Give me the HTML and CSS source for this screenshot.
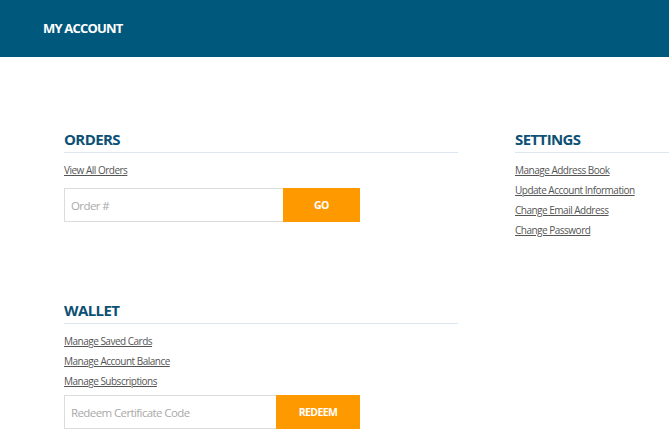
FILE: index.html
```html
<!DOCTYPE html>
<html>
<head>
<meta charset="utf-8">
<link rel="stylesheet" href="styles.css">
</head>
<body>
<header class="topbar"><h1 class="topbar-title">MY ACCOUNT</h1></header>
<main class="content">
  <div class="col">
    <section class="block block-orders">
      <h2 class="block-title">ORDERS</h2>
      <ul class="links">
        <li><a href="#">View All Orders</a></li>
      </ul>
      <form class="inline-form form-orders">
        <input class="field" type="text" placeholder="Order #">
        <button class="btn" type="button">GO</button>
      </form>
    </section>
    <section class="block block-wallet">
      <h2 class="block-title">WALLET</h2>
      <ul class="links">
        <li><a href="#">Manage Saved Cards</a></li>
        <li><a href="#">Manage Account Balance</a></li>
        <li><a href="#">Manage Subscriptions</a></li>
      </ul>
      <form class="inline-form form-wallet">
        <input class="field" type="text" placeholder="Redeem Certificate Code">
        <button class="btn" type="button">REDEEM</button>
      </form>
    </section>
  </div>
  <div class="col">
    <section class="block">
      <h2 class="block-title">SETTINGS</h2>
      <ul class="links">
        <li><a href="#">Manage Address Book</a></li>
        <li><a href="#">Update Account Information</a></li>
        <li><a href="#">Change Email Address</a></li>
        <li><a href="#">Change Password</a></li>
      </ul>
    </section>
  </div>
</main>
</body>
</html>
```
FILE: styles.css
```css
html, body {
  margin: 0;
  padding: 0;
  background: #ffffff;
  overflow: hidden;
}
body {
  font-family: "Open Sans", "Liberation Sans", sans-serif;
  width: 669px;
}
.topbar {
  height: 57px;
  background: #00587c;
  display: flex;
  align-items: center;
  padding-left: 43px;
}
.topbar-title {
  margin: 0 0 2px 0;
  color: #ffffff;
  font-size: 13px;
  font-weight: 700;
  line-height: 16px;
  letter-spacing: -0.8px;
}
.content {
  display: grid;
  grid-template-columns: 394px 394px;
  column-gap: 57px;
  padding: 71px 0 0 64px;
}
.block-wallet {
  margin-top: 77px;
}
.block-title {
  margin: 0;
  font-size: 15px;
  line-height: 22px;
  font-weight: 700;
  letter-spacing: -0.6px;
  color: #0d5075;
  padding-bottom: 2px;
  border-bottom: 1px solid #dbe6f0;
}
.links {
  list-style: none;
  margin: 7px 0 0 0;
  padding: 0;
}
.links li {
  height: 20px;
  line-height: 20px;
  font-size: 10px;
  letter-spacing: -0.5px;
}
.links a {
  color: #555555;
  text-decoration: underline;
}
.inline-form {
  display: flex;
  width: 296px;
  height: 34px;
}
.form-orders { margin-top: 8px; }
.form-wallet { margin-top: 4px; }
.field {
  flex: 1;
  min-width: 0;
  box-sizing: border-box;
  height: 34px;
  margin: 0;
  border: 1px solid #dcdcdc;
  border-right: none;
  padding: 0 6px;
  font-family: "Open Sans", "Liberation Sans", sans-serif;
  font-size: 11.5px;
  letter-spacing: -0.6px;
  color: #333;
  outline: none;
}
.field::placeholder {
  color: #a9a9a9;
}
.btn {
  box-sizing: border-box;
  height: 34px;
  margin: 0;
  border: none;
  background: #ff9900;
  color: #ffffff;
  font-family: "Open Sans", "Liberation Sans", sans-serif;
  font-weight: 700;
  font-size: 10.5px;
  letter-spacing: -0.6px;
  padding: 0;
}
.form-orders .btn { width: 77px; }
.form-wallet .btn { width: 84px; }
```
